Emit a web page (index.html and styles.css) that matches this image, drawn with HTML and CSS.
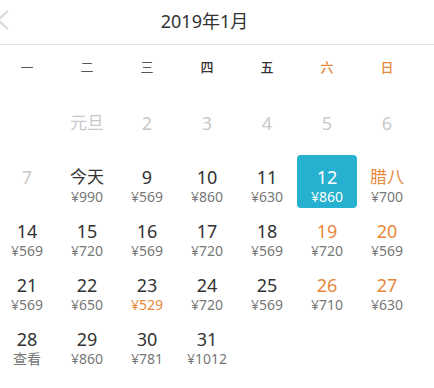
FILE: index.html
```html
<!DOCTYPE html>
<html lang="zh-CN">
<head>
<meta charset="utf-8">
<link rel="stylesheet" href="styles.css">
</head>
<body>
<div class="cal">
  <header class="head">
    <svg class="back" width="12" height="24" viewBox="0 0 12 24"><polyline points="8,3 -2,12 8,21" fill="none" stroke="#dcdcdc" stroke-width="2.4"/></svg>
    <div class="title">2019年1月</div>
  </header>
  <div class="week">
    <span class="wd light">一</span><span class="wd light">二</span><span class="wd light">三</span><span class="wd">四</span><span class="wd">五</span><span class="wd orange">六</span><span class="wd orange">日</span>
  </div>
  <div class="grid">
    <div class="cell"></div>
    <div class="cell off"><span class="num cjk">元旦</span></div>
    <div class="cell off"><span class="num">2</span></div>
    <div class="cell off"><span class="num">3</span></div>
    <div class="cell off"><span class="num">4</span></div>
    <div class="cell off"><span class="num">5</span></div>
    <div class="cell off"><span class="num">6</span></div>

    <div class="cell off"><span class="num">7</span></div>
    <div class="cell"><span class="num cjk">今天</span><span class="price">¥990</span></div>
    <div class="cell"><span class="num">9</span><span class="price">¥569</span></div>
    <div class="cell"><span class="num">10</span><span class="price">¥860</span></div>
    <div class="cell"><span class="num">11</span><span class="price">¥630</span></div>
    <div class="cell sel"><span class="num">12</span><span class="price">¥860</span></div>
    <div class="cell"><span class="num cjk orange">腊八</span><span class="price">¥700</span></div>

    <div class="cell"><span class="num">14</span><span class="price">¥569</span></div>
    <div class="cell"><span class="num">15</span><span class="price">¥720</span></div>
    <div class="cell"><span class="num">16</span><span class="price">¥569</span></div>
    <div class="cell"><span class="num">17</span><span class="price">¥720</span></div>
    <div class="cell"><span class="num">18</span><span class="price">¥569</span></div>
    <div class="cell"><span class="num orange">19</span><span class="price">¥720</span></div>
    <div class="cell"><span class="num orange">20</span><span class="price">¥569</span></div>

    <div class="cell"><span class="num">21</span><span class="price">¥569</span></div>
    <div class="cell"><span class="num">22</span><span class="price">¥650</span></div>
    <div class="cell"><span class="num">23</span><span class="price orange">¥529</span></div>
    <div class="cell"><span class="num">24</span><span class="price">¥720</span></div>
    <div class="cell"><span class="num">25</span><span class="price">¥569</span></div>
    <div class="cell"><span class="num orange">26</span><span class="price">¥710</span></div>
    <div class="cell"><span class="num orange">27</span><span class="price">¥630</span></div>

    <div class="cell"><span class="num">28</span><span class="price">查看</span></div>
    <div class="cell"><span class="num">29</span><span class="price">¥860</span></div>
    <div class="cell"><span class="num">30</span><span class="price">¥781</span></div>
    <div class="cell"><span class="num">31</span><span class="price">¥1012</span></div>
  </div>
</div>
</body>
</html>
```

FILE: styles.css
```css
html, body {
  margin: 0;
  padding: 0;
  background: #fff;
}
body {
  width: 434px;
  height: 388px;
  overflow: hidden;
  font-family: "Noto Sans", "Noto Sans CJK SC", sans-serif;
  color: #333;
}
.cal {
  width: 437px;
  margin-left: -3px;
}
.head {
  position: relative;
  height: 44px;
  border-bottom: 1px solid #e3e3e3;
  display: flex;
  align-items: center;
  justify-content: center;
}
.back {
  position: absolute;
  left: 3px;
  top: 8px;
}
.title {
  font-size: 18px;
  color: #333;
  margin-right: 22px;
  margin-top: -5px;
}
.week {
  display: grid;
  grid-template-columns: repeat(7, 60px);
  height: 43px;
  align-items: center;
  margin-bottom: 13px;
}
.wd {
  text-align: center;
  font-size: 13px;
  color: #333;
  font-weight: 500;
}
.wd.light {
  color: #555;
  font-weight: 400;
}
.orange {
  color: #e8873a !important;
}
.grid {
  display: grid;
  grid-template-columns: repeat(7, 60px);
  grid-auto-rows: 54px;
}
.cell {
  display: flex;
  flex-direction: column;
  align-items: center;
  padding-top: 11px;
  box-sizing: border-box;
  border-radius: 4px;
}
.num {
  font-size: 18px;
  line-height: 22px;
  color: #333;
}
.num.cjk {
  font-size: 17px;
}
.price {
  font-size: 14px;
  line-height: 18px;
  color: #777;
}
.off .num {
  color: #c9c9c9;
}
.sel {
  background: #27b1d0;
  height: 53px;
}
.sel .num, .sel .price {
  color: #fff;
}
```
